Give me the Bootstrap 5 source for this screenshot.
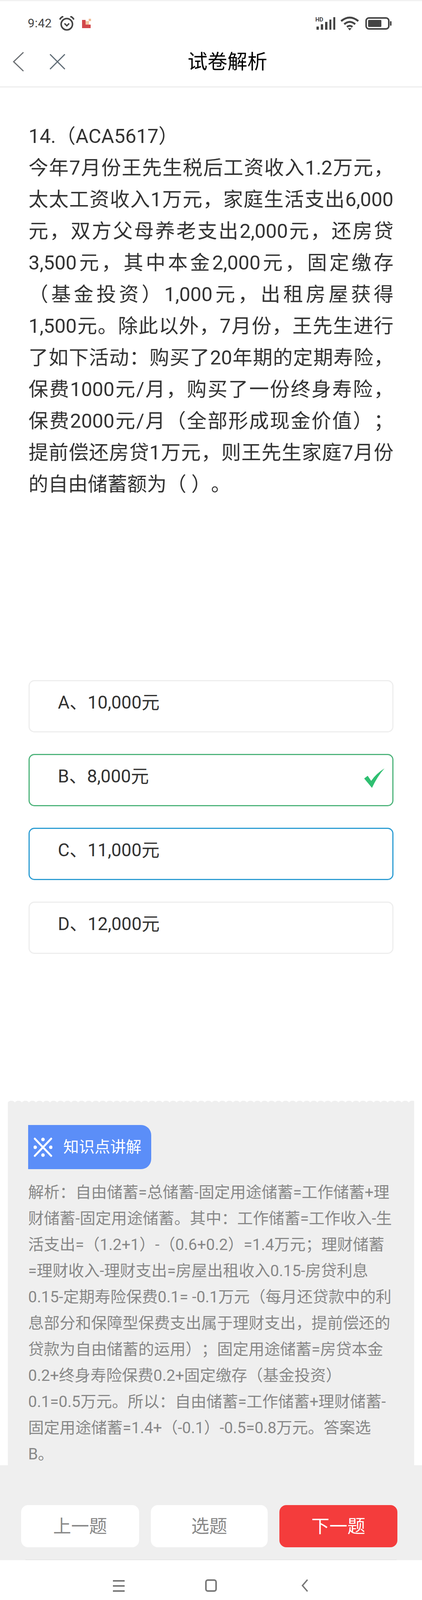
<!DOCTYPE html>
<html lang="zh-CN">
<head>
<meta charset="utf-8">
<title>试卷解析</title>
<link rel="stylesheet" href="https://cdn.jsdelivr.net/npm/bootstrap@5.3.0/dist/css/bootstrap.min.css">
<style>
html,body{background:#fff}
body{width:1080px;font-family:Roboto,"Noto Sans CJK SC",sans-serif;color:#333;text-spacing-trim:space-all}
.top-hair{height:3px;background:#f1f1f1}
.status-row{height:97px;padding:16px 77px 0 71px}
.status-time{font-size:31px;line-height:36px;color:#444;letter-spacing:.5px;width:79px}
.red-ico{margin-left:18px}
.app-head{height:124px;border-bottom:3px solid #eeeeee}
.head-ico{margin-left:33px;margin-top:-6px}
.head-ico2{margin-left:66px;margin-top:-6px}
.head-title{font-size:51px;line-height:60px;color:#000;margin-left:313px;margin-top:-3px}
.q-wrap{padding:84px 73px 0 73px}
.q-text{font-size:50.5px;line-height:81px;color:#333;text-align:justify;height:1433px;margin:0}
.opt{height:134px;border:3px solid #eeeeee;border-radius:15px;margin-bottom:55px;padding:24px 0 0 72px;font-size:46px;line-height:60px;color:#333;background:#fff}
.opt:last-child{margin-bottom:0}
.opt-right{border-color:#4fb47c}
.opt-pick{border-color:#2d9dd3}
.opt-mark{right:20px;top:34px}
.tear{height:20px;margin:373px 20px 0;background-image:radial-gradient(circle at 9px 14px,#efefef 11px,transparent 11.5px);background-size:18px 20px;background-repeat:repeat-x}
.explain{margin:0 20px;background:#efefef;height:916px;padding:45px 54px 0 52px}
.tag-blue{width:315px;height:113px;background:#5b8ef8;border-radius:0 26px 26px 0;color:#fff;font-size:40px;padding-left:14px}
.tag-text{margin-left:28px}
.explain-text{font-size:40.3px;line-height:67px;color:#888;margin:26px 0 0 0}
.foot-bar{background:#efefef;height:243px;padding:102px 63px 0 54px}
.fbtn{height:108px;width:302px;border-radius:18px;border:0;background:#fff;color:#888;font-size:46px;padding:0}
.fbtn-next{background:#f43c3c;color:#fff}
.fbtn-mid{width:299px}
.nav-line{height:2px;background:#e6e6e6;margin:-2px 65px 0}
.sys-nav{height:130px;padding:49px 0 0 289px}
.nav-menu{margin-top:2px}
.nav-sq{margin-left:206px}
.nav-bk{margin-left:216px}
</style>
</head>
<body>
<div class="top-hair"></div>
<div class="status-row d-flex align-items-center">
  <span class="status-time">9:42</span>
  <svg width="42" height="38" viewBox="0 0 42 38"><circle cx="21" cy="21" r="14.5" fill="none" stroke="#444" stroke-width="4"/><path d="M15 19l6 6 6-6" fill="none" stroke="#444" stroke-width="3.5"/><path d="M3 9Q6 3 12 1M39 9Q36 3 30 1" fill="none" stroke="#444" stroke-width="4"/></svg>
  <svg class="red-ico" width="24" height="24" viewBox="0 0 24 24"><rect x="0" y="3" width="9" height="21" fill="#d2474a"/><rect x="0" y="15" width="22" height="9" fill="#d2474a"/><rect x="9" y="6" width="9" height="9" fill="#f4c7a4"/><rect x="17" y="0" width="6" height="6" fill="#f0bd96"/></svg>
  <div class="ms-auto d-flex align-items-center gap-2">
    <svg width="52" height="36" viewBox="0 0 52 36"><text x="0" y="13" font-family="Roboto,sans-serif" font-weight="700" font-size="15" fill="#444">HD</text><g fill="#444"><rect x="3" y="26" width="6" height="8"/><rect x="14" y="20" width="6" height="14"/><rect x="25" y="14" width="6" height="20"/><rect x="36" y="8" width="5" height="26"/><rect x="46" y="2" width="5" height="32"/></g></svg>
    <svg class="ms-1" width="48" height="36" viewBox="0 0 48 36"><path d="M2 12Q24-6 46 12M10 20Q24 8 38 20M17 27Q24 21 31 27" fill="none" stroke="#444" stroke-width="5"/><path d="M19 30h10l-5 6z" fill="#444"/></svg>
    <svg class="ms-2" width="68" height="32" viewBox="0 0 68 32"><rect x="2" y="2" width="58" height="28" rx="7" fill="none" stroke="#444" stroke-width="4"/><rect x="7" y="7" width="34" height="18" rx="2" fill="#444"/><rect x="63" y="10" width="4" height="12" rx="2" fill="#444"/></svg>
  </div>
</div>
<header class="app-head d-flex align-items-center">
  <svg class="head-ico" width="28" height="50" viewBox="0 0 28 50"><path d="M27 1L2 25l25 24" fill="none" stroke="#6b6f73" stroke-width="3"/></svg>
  <svg class="head-ico2" width="40" height="40" viewBox="0 0 40 40"><path d="M1 1l38 38M39 1L1 39" fill="none" stroke="#5f6b75" stroke-width="3"/></svg>
  <div class="head-title">试卷解析</div>
</header>
<main class="q-wrap">
  <p class="q-text">14.（ACA5617）<br>今年7月份王先生税后工资收入1.2万元，太太工资收入1万元，家庭生活支出6,000元，双方父母养老支出2,000元，还房贷3,500元，其中本金2,000元，固定缴存（基金投资）1,000元，出租房屋获得1,500元。除此以外，7月份，王先生进行了如下活动：购买了20年期的定期寿险，保费1000元/月，购买了一份终身寿险，保费2000元/月（全部形成现金价值）；提前偿还房贷1万元，则王先生家庭7月份的自由储蓄额为（ ）。</p>
  <div class="opt">A、10,000元</div>
  <div class="opt opt-right position-relative">B、8,000元
    <svg class="opt-mark position-absolute" width="52" height="50" viewBox="0 0 52 50"><path d="M0 26l9-7 9 13Q30 14 52 0Q34 20 20 50z" fill="#2fbf71"/></svg>
  </div>
  <div class="opt opt-pick">C、11,000元</div>
  <div class="opt">D、12,000元</div>
</main>
<div class="tear"></div>
<section class="explain">
  <div class="tag-blue d-flex align-items-center">
    <svg width="48" height="50" viewBox="0 0 48 50"><path d="M3 3l42 44M45 3L3 47" stroke="#fff" stroke-width="5" fill="none" stroke-linecap="round"/><g fill="#fff"><circle cx="24" cy="5" r="4.5"/><circle cx="24" cy="45" r="4.5"/><circle cx="4" cy="25" r="4.5"/><circle cx="44" cy="25" r="4.5"/></g></svg>
    <span class="tag-text">知识点讲解</span>
  </div>
  <p class="explain-text">解析：自由储蓄=总储蓄-固定用途储蓄=工作储蓄+理财储蓄-固定用途储蓄。其中：工作储蓄=工作收入-生活支出=（1.2+1）-（0.6+0.2）=1.4万元；理财储蓄<br>=理财收入-理财支出=房屋出租收入0.15-房贷利息0.15-定期寿险保费0.1= -0.1万元（每月还贷款中的利息部分和保障型保费支出属于理财支出，提前偿还的贷款为自由储蓄的运用）；固定用途储蓄=房贷本金0.2+终身寿险保费0.2+固定缴存（基金投资）0.1=0.5万元。所以：自由储蓄=工作储蓄+理财储蓄-固定用途储蓄=1.4+（-0.1）-0.5=0.8万元。答案选B。</p>
</section>
<div class="foot-bar d-flex justify-content-between">
  <button class="fbtn" type="button">上一题</button>
  <button class="fbtn fbtn-mid" type="button">选题</button>
  <button class="fbtn fbtn-next" type="button">下一题</button>
</div>
<div class="nav-line"></div>
<nav class="sys-nav d-flex align-items-start">
  <svg class="nav-menu" width="30" height="30" viewBox="0 0 30 30"><path d="M0 2h30M0 15h30M0 28h30" stroke="#777" stroke-width="4"/></svg>
  <svg class="nav-sq" width="30" height="32" viewBox="0 0 30 32"><rect x="2" y="2" width="26" height="28" rx="5" fill="none" stroke="#777" stroke-width="4"/></svg>
  <svg class="nav-bk" width="18" height="32" viewBox="0 0 18 32"><path d="M16 1L3 16l13 15" fill="none" stroke="#777" stroke-width="3.5"/></svg>
</nav>
<script src="https://cdn.jsdelivr.net/npm/bootstrap@5.3.0/dist/js/bootstrap.bundle.min.js"></script>
</body>
</html>
